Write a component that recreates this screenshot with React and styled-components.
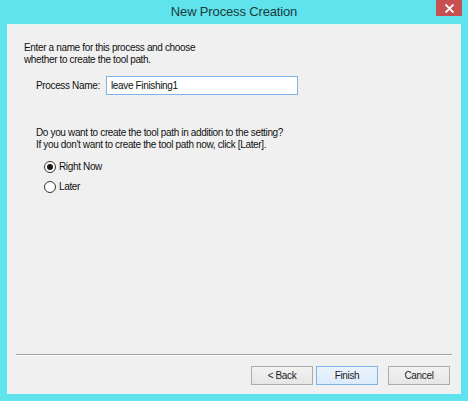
import React, { useState } from "react";
import styled, { createGlobalStyle, css } from "styled-components";

const GlobalStyle = createGlobalStyle`
  html, body {
    margin: 0;
    padding: 0;
    background: #5fe3ec;
  }
  * {
    box-sizing: border-box;
  }
`;

const App = () => {
  const [processName, setProcessName] = useState("leave Finishing1");
  const [mode, setMode] = useState("now");

  return (
    <Window>
      <GlobalStyle />
      <TitleBar>
        <span />
        <Title>New Process Creation</Title>
        <CloseBtn aria-label="Close">
          <svg width="9" height="9" viewBox="0 0 9 9">
            <path
              d="M1.2 1.2 L7.8 7.8 M7.8 1.2 L1.2 7.8"
              stroke="#fff"
              strokeWidth="1.9"
              strokeLinecap="square"
            />
          </svg>
        </CloseBtn>
      </TitleBar>
      <Body>
        <Content>
          <Text>
            Enter a name for this process and choose
            <br />
            whether to create the tool path.
          </Text>
          <NameRow>
            <Label>Process Name:</Label>
            <NameInput
              value={processName}
              onChange={e => setProcessName(e.target.value)}
            />
          </NameRow>
          <Question>
            Do you want to create the tool path in addition to the setting?
            <br />
            If you don't want to create the tool path now, click [Later].
          </Question>
          <RadioGroup>
            <RadioRow onClick={() => setMode("now")}>
              <RadioCircle checked={mode === "now"} />
              <Text>Right Now</Text>
            </RadioRow>
            <RadioRow onClick={() => setMode("later")}>
              <RadioCircle checked={mode === "later"} />
              <Text>Later</Text>
            </RadioRow>
          </RadioGroup>
        </Content>
        <Footer>
          <Separator />
          <ButtonRow>
            <Button>&lt; Back</Button>
            <Button isDefault>Finish</Button>
            <Button spaced>Cancel</Button>
          </ButtonRow>
        </Footer>
      </Body>
    </Window>
  );
};

const Window = styled.div`
  width: 468px;
  height: 401px;
  display: flex;
  flex-direction: column;
  background: #5fe3ec;
  font-family: "Liberation Sans", Arial, sans-serif;
`;

const TitleBar = styled.div`
  height: 24px;
  display: grid;
  grid-template-columns: 1fr auto 1fr;
  align-items: center;
`;

const Title = styled.div`
  font-size: 13px;
  letter-spacing: -0.15px;
  color: #1d3a3c;
  padding-bottom: 1px;
`;

const CloseBtn = styled.div`
  justify-self: end;
  align-self: start;
  width: 26px;
  height: 16px;
  margin-right: 6px;
  background: #c75050;
  display: flex;
  align-items: center;
  justify-content: center;
`;

const Body = styled.div`
  flex: 1;
  margin: 0 7px 7px 7px;
  background: #f0f0f0;
  border: 1px solid #e4f7f8;
  display: flex;
  flex-direction: column;
`;

const Content = styled.div`
  padding: 17px 0 0 16px;
  display: flex;
  flex-direction: column;
`;

const Text = styled.div`
  font-size: 10px;
  letter-spacing: -0.35px;
  line-height: 12px;
  color: #111;
`;

const NameRow = styled.div`
  display: flex;
  align-items: center;
  margin: 10px 0 0 12px;
`;

const Label = styled(Text)`
  width: 70px;
`;

const NameInput = styled.input`
  width: 192px;
  height: 19px;
  border: 1px solid #7eb4ea;
  background: #fff;
  padding: 0 4px;
  font-family: "Liberation Sans", Arial, sans-serif;
  font-size: 10px;
  letter-spacing: -0.35px;
  color: #111;
  outline: none;
`;

const Question = styled(Text)`
  margin: 32px 0 0 12px;
`;

const RadioGroup = styled.div`
  margin: 6px 0 0 20px;
  display: flex;
  flex-direction: column;
`;

const RadioRow = styled.div`
  height: 20px;
  display: flex;
  align-items: center;
  gap: 3px;
  cursor: default;
`;

const RadioCircle = styled.span`
  width: 12px;
  height: 12px;
  border-radius: 50%;
  border: 1px solid #333;
  background: #fff;
  display: flex;
  align-items: center;
  justify-content: center;
  ${props =>
    props.checked &&
    css`
      &::after {
        content: "";
        width: 6px;
        height: 6px;
        border-radius: 50%;
        background: #1a1a1a;
      }
    `}
`;

const Footer = styled.div`
  margin-top: auto;
  display: flex;
  flex-direction: column;
`;

const Separator = styled.div`
  margin: 0 8px 0 8px;
  height: 2px;
  border-top: 1px solid #a0a0a0;
  border-bottom: 1px solid #fff;
`;

const ButtonRow = styled.div`
  display: flex;
  justify-content: flex-end;
  gap: 3px;
  padding: 10px 10px 8px 0;
`;

const Button = styled.button`
  width: 62px;
  height: 19px;
  padding: 0;
  border: 1px solid #acacac;
  background: linear-gradient(#f2f2f2, #e6e6e6);
  font-family: "Liberation Sans", Arial, sans-serif;
  font-size: 10px;
  letter-spacing: -0.35px;
  color: #222;
  ${props =>
    props.isDefault &&
    css`
      border-color: #7eb4ea;
      background: linear-gradient(#eaf3fc, #dcebfb);
    `}
  ${props =>
    props.spaced &&
    css`
      margin-left: 7px;
    `}
`;

export default App;
